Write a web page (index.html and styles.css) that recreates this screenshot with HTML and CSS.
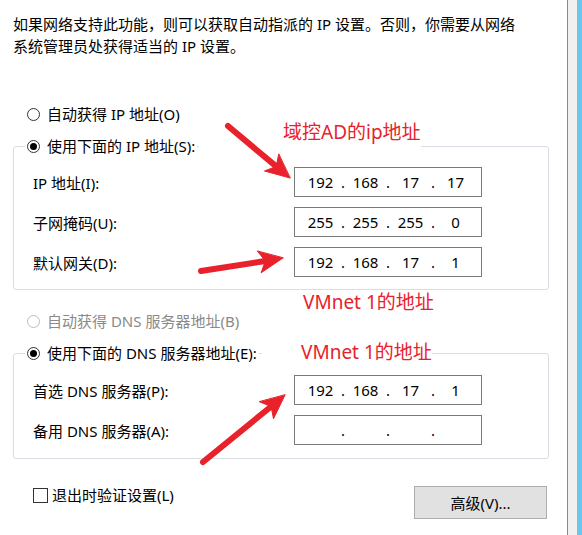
FILE: index.html
```html
<!DOCTYPE html>
<html lang="zh-CN">
<head>
  <meta charset="UTF-8">
  <title>Internet 协议版本 4 (TCP/IPv4) 属性</title>
  <link rel="stylesheet" href="styles.css">
</head>
<body>
  <div class="window">
    <main class="panel">
      <p class="intro">如果网络支持此功能，则可以获取自动指派的 IP 设置。否则，你需要从网络<br>系统管理员处获得适当的 IP 设置。</p>

      <label class="radio radio-top"><span class="dot"></span>自动获得 IP 地址(O)</label>

      <fieldset class="group">
        <legend><label class="radio"><span class="dot checked"></span>使用下面的 IP 地址(S):</label></legend>
        <div class="fields">
          <div class="row">
            <span class="label">IP 地址(I):</span>
            <div class="ip"><span class="seg">192</span><span class="sep">.</span><span class="seg">168</span><span class="sep">.</span><span class="seg">17</span><span class="sep">.</span><span class="seg">17</span></div>
          </div>
          <div class="row">
            <span class="label">子网掩码(U):</span>
            <div class="ip"><span class="seg">255</span><span class="sep">.</span><span class="seg">255</span><span class="sep">.</span><span class="seg">255</span><span class="sep">.</span><span class="seg">0</span></div>
          </div>
          <div class="row">
            <span class="label">默认网关(D):</span>
            <div class="ip"><span class="seg">192</span><span class="sep">.</span><span class="seg">168</span><span class="sep">.</span><span class="seg">17</span><span class="sep">.</span><span class="seg">1</span></div>
          </div>
        </div>
      </fieldset>

      <label class="radio radio-mid disabled"><span class="dot"></span>自动获得 DNS 服务器地址(B)</label>

      <fieldset class="group group-dns">
        <legend><label class="radio"><span class="dot checked"></span>使用下面的 DNS 服务器地址(E):</label></legend>
        <div class="fields">
          <div class="row">
            <span class="label">首选 DNS 服务器(P):</span>
            <div class="ip"><span class="seg">192</span><span class="sep">.</span><span class="seg">168</span><span class="sep">.</span><span class="seg">17</span><span class="sep">.</span><span class="seg">1</span></div>
          </div>
          <div class="row">
            <span class="label">备用 DNS 服务器(A):</span>
            <div class="ip"><span class="seg"></span><span class="sep">.</span><span class="seg"></span><span class="sep">.</span><span class="seg"></span><span class="sep">.</span><span class="seg"></span></div>
          </div>
        </div>
      </fieldset>

      <div class="footer">
        <label class="check"><span class="box"></span>退出时验证设置(L)</label>
        <button type="button" class="advanced">高级(V)...</button>
      </div>
    </main>
    <div class="edge"></div>
  </div>

  <!-- red annotations drawn on top of the dialog -->
  <div class="note note-ad">域控AD的ip地址</div>
  <div class="note note-gw">VMnet 1的地址</div>
  <div class="note note-dns">VMnet 1的地址</div>
  <svg class="arrows" width="582" height="535" viewBox="0 0 582 535">
    <g fill="#e8212b" stroke="#e8212b" stroke-linecap="round">
      <line x1="228" y1="126" x2="276.2" y2="166.4" stroke-width="6"/>
      <polygon points="290,178 264.5,171 276.2,166.4 278.7,154.2" stroke-width="1"/>
      <line x1="201" y1="271" x2="265.3" y2="261" stroke-width="6"/>
      <polygon points="283,258 261.1,272.8 265.3,261 257.5,251.2" stroke-width="1"/>
      <line x1="203" y1="462" x2="271.1" y2="406.5" stroke-width="6"/>
      <polygon points="285,395 273.5,418.8 271.1,406.5 259.5,401.8" stroke-width="1"/>
    </g>
  </svg>
</body>
</html>
```

FILE: styles.css
```css
body {
  margin: 0;
  font-family: "Noto Sans", "Noto Sans CJK SC", sans-serif;
  font-size: 15px;
  color: #000;
  background: #fff;
  position: relative;
}
.window {
  display: flex;
  height: 535px;
  overflow: hidden;
}
.panel {
  box-sizing: border-box;
  width: 567px;
  padding: 13px 18px 0 13px;
}
.edge {
  width: 14px;
  border-left: 1px solid #8a8a8a;
  background: linear-gradient(to right, #f0f0f0 9px, #69c7ea 9px);
}
.intro {
  margin: 0;
  line-height: 22px;
}
.radio {
  display: flex;
  align-items: center;
  gap: 7px;
  line-height: 22px;
  white-space: nowrap;
}
.radio-top {
  margin-top: 46px;
  padding-left: 14px;
}
.radio-mid {
  margin-top: 20px;
  padding-left: 14px;
}
.dot {
  box-sizing: border-box;
  width: 13px;
  height: 13px;
  border: 1px solid #333;
  border-radius: 50%;
  background: #fff;
  display: flex;
  align-items: center;
  justify-content: center;
}
.dot.checked::after {
  content: '';
  width: 7px;
  height: 7px;
  border-radius: 50%;
  background: #000;
}
.disabled {
  color: #8a8a8a;
}
.disabled .dot {
  border-color: #bcbcbc;
}
.group {
  margin: 10px 0 0;
  padding: 0 12px 12px 11px;
  border: 1px solid #d9dee5;
  border-radius: 3px;
  min-width: 0;
}
.group legend {
  padding: 0 2px;
}
.fields {
  display: flex;
  flex-direction: column;
  gap: 10px;
  padding-top: 10px;
}
.group-dns .fields {
  padding-top: 11px;
}
.group-dns {
  padding-bottom: 13px;
}
.row {
  display: flex;
  align-items: center;
  height: 30px;
  padding-left: 8px;
}
.label {
  width: 261px;
  flex-shrink: 0;
}
.ip {
  box-sizing: border-box;
  width: 188px;
  height: 30px;
  border: 1px solid #7a7a7a;
  display: flex;
  align-items: center;
  padding-left: 3px;
}
.seg {
  width: 45px;
  text-align: center;
}
.sep {
  width: 4px;
  margin: 0 -2px;
  text-align: center;
}
.footer {
  display: flex;
  justify-content: space-between;
  align-items: flex-start;
  margin-top: 25px;
}
.check {
  display: flex;
  align-items: center;
  gap: 4px;
  line-height: 22px;
  padding-left: 20px;
}
.box {
  box-sizing: border-box;
  width: 15px;
  height: 15px;
  border: 1px solid #333;
  background: #fff;
}
.advanced {
  width: 133px;
  height: 33px;
  margin: 2px 2px 0 0;
  background: #e1e1e1;
  border: 1px solid #adadad;
  font-family: inherit;
  font-size: 15px;
  color: #000;
}
/* annotation labels sit on a white patch that hides the group line under them */
.note {
  position: absolute;
  color: #e8212b;
  background: #fff;
  font-family: "Noto Sans", "Noto Sans CJK SC", sans-serif;
  font-size: 19px;
  line-height: 24px;
  white-space: nowrap;
}
.note-ad {
  left: 199px;
  top: 120px;
  padding: 0 0 6px 84px;
}
.note-gw {
  left: 303px;
  top: 290px;
}
.note-dns {
  left: 262px;
  top: 340px;
  padding: 0 0 2px 39px;
}
.arrows {
  position: absolute;
  left: 0;
  top: 0;
  pointer-events: none;
}
```
